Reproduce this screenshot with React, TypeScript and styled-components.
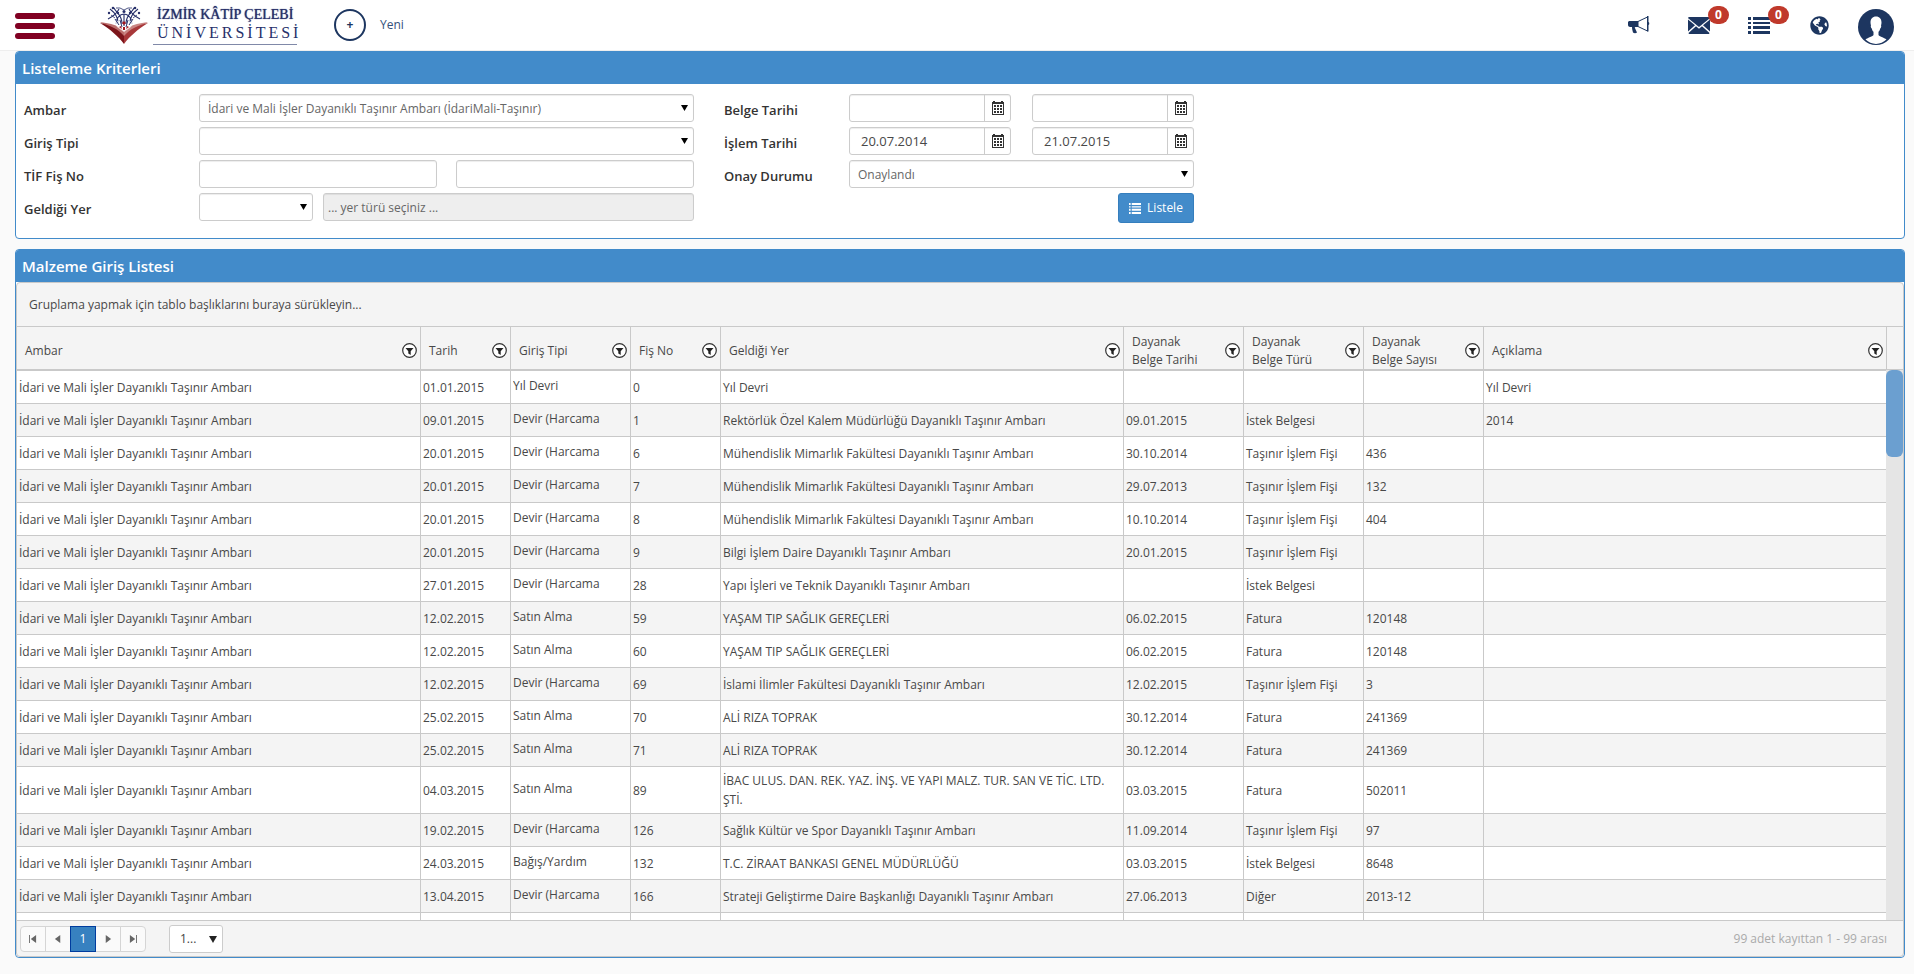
import React from "react";
import styled, { createGlobalStyle, css } from "styled-components";
import { FaGlobeAmericas } from "react-icons/fa";

const blue = "#428bca";
const navy = "#1d3660";
const line = "#c9c9c9";

const GlobalStyle = createGlobalStyle`
  *, *::before, *::after { box-sizing: border-box; }
  body {
    margin: 0;
    background: #fafafa;
    color: #484848;
    font: 12px/18px "Open Sans", "Noto Sans", sans-serif;
  }
  button, input, select { font: inherit; color: inherit; margin: 0; }
`;

const Page = styled.div`
  display: flex;
  flex-direction: column;
  height: 100vh;
  min-height: 500px;
`;

const TopBar = styled.header`
  display: flex;
  align-items: center;
  flex: none;
  height: 51px;
  padding: 0 20px 0 15px;
  background: #fff;
  border-bottom: 1px solid #eee;
`;

const MenuButton = styled.button`
  display: flex;
  flex-direction: column;
  gap: 4px;
  width: 40px;
  padding: 2px 0 0;
  margin-right: 45px;
  border: 0;
  background: none;
  cursor: pointer;
`;

const MenuBar = styled.span`
  height: 6px;
  border-radius: 3px;
  background: #800022;
`;

const Brand = styled.a`
  display: flex;
  align-items: center;
  gap: 5px;
  color: #27306a;
  text-decoration: none;
`;

const BrandText = styled.span`
  display: flex;
  flex-direction: column;
  width: 144px;
  padding: 0 0 2px 4px;
  border-bottom: 1px solid #8089a8;
  font-family: "Liberation Serif", serif;
  line-height: 18px;
  white-space: nowrap;
`;

const BrandName = styled.span`
  font-size: 14px;
  text-shadow: 0 0 1px #27306a;
`;

const BrandKind = styled.span`
  font-size: 16px;
  letter-spacing: 3px;
`;

const NewLink = styled.a`
  display: flex;
  align-items: center;
  gap: 14px;
  margin-left: 37px;
  color: #34507a;
  text-decoration: none;
`;

const PlusCircle = styled.span`
  display: grid;
  place-items: center;
  width: 32px;
  height: 32px;
  border: 2px solid ${navy};
  border-radius: 50%;
  color: ${navy};
  font-weight: 700;
`;

const Tools = styled.nav`
  display: flex;
  align-items: center;
  margin-left: auto;
  color: ${navy};
`;

const ToolButton = styled.button`
  position: relative;
  display: grid;
  place-items: center;
  width: 60px;
  height: 36px;
  padding: 0;
  border: 0;
  background: none;
  cursor: pointer;
`;

const ProfileButton = styled(ToolButton)`
  width: 36px;
  margin-left: 9px;
  margin-top: 4px;
`;

const Badge = styled.span`
  position: absolute;
  top: -1px;
  left: 39px;
  width: 21px;
  height: 18px;
  border-radius: 9px;
  background: #c0392b;
  color: #fff;
  font-size: 12px;
  font-weight: 700;
  line-height: 18px;
`;

const Main = styled.main`
  display: flex;
  flex-direction: column;
  flex: 1;
  gap: 10px;
  min-height: 0;
  padding: 0 9px 16px 15px;
`;

const Panel = styled.section<{ $fill?: boolean }>`
  display: flex;
  flex-direction: column;
  flex: ${(p) => (p.$fill ? "1" : "none")};
  min-height: 0;
  border: 1px solid ${blue};
  border-radius: 4px;
  background: #fff;
  overflow: hidden;
`;

const PanelTitle = styled.h2`
  flex: none;
  margin: 0;
  padding: 0 6px;
  height: 32px;
  background: ${blue};
  color: #fff;
  font-size: 15px;
  font-weight: 600;
  line-height: 32px;
`;

const Criteria = styled.form`
  display: flex;
  align-items: flex-start;
  gap: 30px;
  padding: 10px 8px 17px;
`;

const FieldColumn = styled.div<{ $label: number; $field: number }>`
  display: grid;
  grid-template-columns: ${(p) => p.$label}px minmax(0, ${(p) => p.$field}px);
  grid-auto-rows: 28px;
  row-gap: 5px;
  flex: 0 1 ${(p) => p.$label + p.$field}px;
`;

const Label = styled.label`
  padding-top: 6px;
  color: #333;
  font-size: 13px;
  font-weight: 600;
  line-height: 20px;
`;

const FieldRow = styled.div<{ $gap?: number; $end?: boolean }>`
  display: flex;
  gap: ${(p) => p.$gap ?? 0}px;
  justify-content: ${(p) => (p.$end ? "flex-end" : "flex-start")};
`;

const box = css`
  height: 28px;
  border: 1px solid #ccc;
  border-radius: 3px;
  background: #fff;
  box-shadow: inset 0 1px 1px rgba(0, 0, 0, 0.075);
`;

const TextInput = styled.input`
  ${box}
  flex: 1;
  min-width: 0;
  padding: 0 4px;
  &:disabled {
    background: #eee;
  }
  &::placeholder {
    color: #666;
    opacity: 1;
  }
`;

const SelectWrap = styled.span<{ $width?: number }>`
  position: relative;
  display: flex;
  flex: ${(p) => (p.$width ? `none` : "1")};
  width: ${(p) => (p.$width ? `${p.$width}px` : "auto")};
`;

const SelectBox = styled.select`
  ${box}
  width: 100%;
  padding: 2px 20px 0 8px;
  appearance: none;
  color: #666;
`;

const SelectArrow = styled.svg`
  position: absolute;
  top: 11px;
  right: 6px;
  pointer-events: none;
`;

const DateBox = styled.span`
  ${box}
  display: flex;
  flex: 1;
  min-width: 0;
`;

const DateInput = styled.input`
  flex: 1;
  min-width: 0;
  padding: 0 11px;
  border: 0;
  background: none;
  font-size: 13px;
`;

const DateButton = styled.button`
  display: grid;
  place-items: center;
  width: 26px;
  padding: 0;
  border: 0;
  border-left: 1px solid #ccc;
  background: none;
  color: #333;
`;

const ListButton = styled.button`
  display: flex;
  align-items: center;
  justify-content: center;
  gap: 6px;
  width: 76px;
  height: 30px;
  padding: 0;
  border: 1px solid #357ebd;
  border-radius: 3px;
  background: ${blue};
  color: #fff;
`;

const Grid = styled.div`
  display: flex;
  flex-direction: column;
  flex: 1;
  min-height: 0;
  border: 1px solid ${line};
  border-radius: 4px;
  background: #f4f4f4;
  overflow: hidden;
`;

const GroupBar = styled.div`
  flex: none;
  padding: 0 12px;
  height: 43px;
  line-height: 43px;
`;

const GridArea = styled.div`
  display: flex;
  flex: 1;
  min-height: 0;
  border-top: 1px solid ${line};
  border-bottom: 1px solid ${line};
`;

const Viewport = styled.div`
  flex: 1;
  min-width: 0;
  overflow: auto;
  scrollbar-width: none;
`;

const Table = styled.table`
  width: 100%;
  table-layout: fixed;
  border-collapse: separate;
  border-spacing: 0;
`;

const HeadCell = styled.th`
  position: sticky;
  top: 0;
  height: 44px;
  padding: 5px 3px 0 8px;
  border-left: 1px solid ${line};
  border-bottom: 2px solid ${line};
  background: #f4f4f4;
  font-weight: 400;
  text-align: left;
  &:first-child {
    border-left: 0;
  }
`;

const HeadContent = styled.div`
  display: flex;
  align-items: center;
  justify-content: space-between;
`;

const HeadText = styled.span`
  max-width: 76px;
`;

const FilterButton = styled.button`
  display: grid;
  flex: none;
  padding: 0;
  border: 0;
  background: none;
`;

const Row = styled.tr`
  background: #fff;
  &:nth-child(even) {
    background: #f4f4f4;
  }
`;

const Cell = styled.td`
  height: 33px;
  padding: 4px 2px;
  border-left: 1px solid ${line};
  border-bottom: 1px solid ${line};
  line-height: 19px;
  &:first-child {
    border-left: 0;
  }
`;

const EntryType = styled.div`
  height: 22px;
  overflow: hidden;
`;

const ScrollColumn = styled.div`
  display: flex;
  flex-direction: column;
  flex: none;
  width: 17px;
`;

const ScrollCorner = styled.div`
  height: 43px;
  border-left: 1px solid ${line};
  border-bottom: 1px solid ${line};
`;

const ScrollTrack = styled.div`
  flex: 1;
  background: #e5e5e5;
`;

const ScrollThumb = styled.div`
  height: 87px;
  border-radius: 6px;
  background: #6b9fd0;
`;

const Pager = styled.footer`
  display: flex;
  align-items: center;
  flex: none;
  height: 35px;
  padding: 0 16px 0 3px;
  color: #aaa;
`;

const PageButton = styled.button<{ $current?: boolean }>`
  display: grid;
  place-items: center;
  width: 26px;
  height: 26px;
  margin-right: -1px;
  padding: 0;
  border: 1px solid ${(p) => (p.$current ? "#003c9e" : "#d5d5d5")};
  background: ${(p) => (p.$current ? "#3781c0" : "#fafafa")};
  color: ${(p) => (p.$current ? "#fff" : "#666")};
  position: relative;
  z-index: ${(p) => (p.$current ? 1 : 0)};
  &:first-child {
    border-radius: 4px 0 0 4px;
  }
  &:last-child {
    border-radius: 0 4px 4px 0;
  }
`;

const PageButtons = styled.div`
  display: flex;
  margin-right: 24px;
`;

const PageSize = styled(SelectBox)`
  padding: 0 20px 0 10px;
  color: #444;
  box-shadow: none;
`;

const Summary = styled.span`
  margin-left: auto;
`;

function Logo() {
  return (
    <svg width="48" height="40" viewBox="0 0 48 40" aria-hidden="true">
      <g fill="none" stroke="#27306a" strokeWidth="1.1">
        <path d="M10 4c4 3 8 8 8 14M19 4c-2 4-7 8-11 10M14 3c2 5 8 6 8 16M24 9c-4 0-8 4-8 10M38 4c-4 3-8 8-8 14M29 4c2 4 7 8 11 10M34 3c-2 5-8 6-8 16M24 9c4 0 8 4 8 10M24 9v12" />
        <path d="M16 3h4l4 2 4-2h4M11 10l4 3M37 10l-4 3" strokeWidth="0.8" />
      </g>
      <g fill="#27306a">
        <circle cx="13" cy="3" r="1.3" />
        <circle cx="35" cy="3" r="1.3" />
        <circle cx="24" cy="6.5" r="1.5" />
        <circle cx="9" cy="8" r="1.2" />
        <circle cx="39" cy="8" r="1.2" />
        <circle cx="18" cy="8" r="1.2" />
        <circle cx="30" cy="8" r="1.2" />
      </g>
      <path d="M0 17l6 1c7 1 13 3 18 8v6C18 27 10 23 0 17z" fill="#bd6f6d" />
      <path d="M48 17l-6 1c-7 1-13 3-18 8v6c6-5 14-9 24-15z" fill="#c98583" />
      <path d="M0 18c10 2 18 6 24 13v8C18 31 11 25 0 18z" fill="#7c151b" />
      <path d="M48 18c-10 2-18 6-24 13v8c6-8 13-14 24-21z" fill="#a8383a" />
      <path d="M12 13l8 4 4 6 4-6 8-4-5 9-7 5-7-5z" fill="#fff" opacity="0.75" />
      <path d="M15 14l4 6M33 14l-4 6M20 15l2 7M28 15l-2 7" stroke="#27306a" fill="none" />
      <path d="M22 18l2-2 2 2-2 2zM19 22l2-1 1 3zM29 22l-2-1-1 3zM23 22h2v3h-2z" fill="#a3161e" />
    </svg>
  );
}

function Megaphone() {
  return (
    <svg width="22" height="18" viewBox="0 0 22 18" aria-hidden="true">
      <path
        d="M1 5h9v6H7.500c-1 0-1 1 0 2 0 1 1 2 1.500 3.500-1 1-3 1-4 0C4.500 14.500 4 13 4 11H2C1 11 0 10 0 9V6z"
        fill="currentColor"
      />
      <path d="M10 5.500L19.500 1v14L10 10.500z" fill="none" stroke="currentColor" strokeWidth="1" />
      <path d="M19 0h1.500v6c1 0 1 3 0 3v6.500H19z" fill="currentColor" />
    </svg>
  );
}

function Envelope() {
  return (
    <svg width="22" height="17" viewBox="0 0 22 17" aria-hidden="true">
      <path d="M1 0h20c1 0 1 1 .5 1.500L11 10 .5 1.500C0 1 0 0 1 0z" fill="currentColor" />
      <path d="M0 2.500l7 5.800-7 6.200zM22 2.500l-7 5.800 7 6.200zM8 9.200l3 2.600 3-2.600 7.500 6.800c0 .5-.5 1-1 1h-19c-.5 0-1-.5-1-1z" fill="currentColor" />
    </svg>
  );
}

function ListIcon({ width, height }: { width: number; height: number }) {
  return (
    <svg width={width} height={height} viewBox="0 0 22 17" preserveAspectRatio="none" aria-hidden="true">
      <path
        d="M0 0h3v3H0zM5 0h17v3H5zM0 5h3v2H0zM5 5h17v2H5zM0 9h3v3H0zM5 9h17v3H5zM0 14h3v3H0zM5 14h17v3H5z"
        fill="currentColor"
      />
    </svg>
  );
}

function Avatar() {
  return (
    <svg width="36" height="36" viewBox="0 0 36 36" aria-hidden="true">
      <circle cx="18" cy="18" r="18" fill="currentColor" />
      <path
        d="M18 7.500c-3.500 0-5.500 2.500-5.500 6 0 1 .2 2 .5 3-.6.500 0 2.500.8 3 .3 1.500.9 2.500 1.700 3.300V26c-.5 1.500-5.500 2.500-8 4.500A17 17 0 0 0 18 35a17 17 0 0 0 10.500-4.500c-2.500-2-7.500-3-8-4.500v-3.200c.8-.8 1.400-1.800 1.700-3.300.8-.5 1.400-2.500.8-3 .3-1 .5-2 .5-3 0-3.500-2-6-5.500-6z"
        fill="#fff"
      />
    </svg>
  );
}

function CalendarIcon() {
  return (
    <svg width="12" height="14" viewBox="0 0 12 14" shapeRendering="crispEdges" aria-hidden="true">
      <path
        d="M1 0h2v1h6V0h2v1h1v13H0V1h1zM1 3v10h10V3z"
        fill="currentColor"
        fillRule="evenodd"
      />
      <path
        d="M2 4h2v2H2zM5 4h2v2H5zM8 4h2v2H8zM2 7h2v2H2zM5 7h2v2H5zM8 7h2v2H8zM2 10h2v2H2zM5 10h2v2H5zM8 10h2v2H8z"
        fill="currentColor"
      />
    </svg>
  );
}

function FilterIcon() {
  return (
    <svg width="15" height="15" viewBox="0 0 15 15" aria-hidden="true">
      <circle cx="7.5" cy="7.5" r="6.8" fill="#fff" stroke="#333" strokeWidth="1.2" />
      <path d="M3.500 5h8L8.700 8.200V12L6.300 10.500V8.200z" fill="#222" />
    </svg>
  );
}

function Dropdown({
  id,
  label,
  width,
  value,
}: {
  id: string;
  label?: string;
  width?: number;
  value: string;
}) {
  return (
    <SelectWrap $width={width}>
      <SelectBox id={id} aria-label={label}>
        <option>{value}</option>
      </SelectBox>
      <SelectArrow width="7" height="6" viewBox="0 0 7 6">
        <path d="M0 0h7L3.500 6z" fill="#000" />
      </SelectArrow>
    </SelectWrap>
  );
}

function DateField({ id, label, value }: { id: string; label?: string; value: string }) {
  return (
    <DateBox>
      <DateInput id={id} aria-label={label} defaultValue={value} />
      <DateButton type="button" aria-label="Takvim">
        <CalendarIcon />
      </DateButton>
    </DateBox>
  );
}

const columns: { title: string; width?: number }[] = [
  { title: "Ambar" },
  { title: "Tarih", width: 90 },
  { title: "Giriş Tipi", width: 120 },
  { title: "Fiş No", width: 90 },
  { title: "Geldiği Yer" },
  { title: "Dayanak Belge Tarihi", width: 120 },
  { title: "Dayanak Belge Türü", width: 120 },
  { title: "Dayanak Belge Sayısı", width: 120 },
  { title: "Açıklama" },
];

const store = "İdari ve Mali İşler Dayanıklı Taşınır Ambarı";
const engineering = "Mühendislik Mimarlık Fakültesi Dayanıklı Taşınır Ambarı";

const rows: string[][] = [
  [store, "01.01.2015", "Yıl Devri", "0", "Yıl Devri", "", "", "", "Yıl Devri"],
  [store, "09.01.2015", "Devir (Harcama", "1", "Rektörlük Özel Kalem Müdürlüğü Dayanıklı Taşınır Ambarı", "09.01.2015", "İstek Belgesi", "", "2014"],
  [store, "20.01.2015", "Devir (Harcama", "6", engineering, "30.10.2014", "Taşınır İşlem Fişi", "436", ""],
  [store, "20.01.2015", "Devir (Harcama", "7", engineering, "29.07.2013", "Taşınır İşlem Fişi", "132", ""],
  [store, "20.01.2015", "Devir (Harcama", "8", engineering, "10.10.2014", "Taşınır İşlem Fişi", "404", ""],
  [store, "20.01.2015", "Devir (Harcama", "9", "Bilgi İşlem Daire Dayanıklı Taşınır Ambarı", "20.01.2015", "Taşınır İşlem Fişi", "", ""],
  [store, "27.01.2015", "Devir (Harcama", "28", "Yapı İşleri ve Teknik Dayanıklı Taşınır Ambarı", "", "İstek Belgesi", "", ""],
  [store, "12.02.2015", "Satın Alma", "59", "YAŞAM TIP SAĞLIK GEREÇLERİ", "06.02.2015", "Fatura", "120148", ""],
  [store, "12.02.2015", "Satın Alma", "60", "YAŞAM TIP SAĞLIK GEREÇLERİ", "06.02.2015", "Fatura", "120148", ""],
  [store, "12.02.2015", "Devir (Harcama", "69", "İslami İlimler Fakültesi Dayanıklı Taşınır Ambarı", "12.02.2015", "Taşınır İşlem Fişi", "3", ""],
  [store, "25.02.2015", "Satın Alma", "70", "ALİ RIZA TOPRAK", "30.12.2014", "Fatura", "241369", ""],
  [store, "25.02.2015", "Satın Alma", "71", "ALİ RIZA TOPRAK", "30.12.2014", "Fatura", "241369", ""],
  [store, "04.03.2015", "Satın Alma", "89", "İBAC ULUS. DAN. REK. YAZ. İNŞ. VE YAPI MALZ. TUR. SAN VE TİC. LTD. ŞTİ.", "03.03.2015", "Fatura", "502011", ""],
  [store, "19.02.2015", "Devir (Harcama", "126", "Sağlık Kültür ve Spor Dayanıklı Taşınır Ambarı", "11.09.2014", "Taşınır İşlem Fişi", "97", ""],
  [store, "24.03.2015", "Bağış/Yardım", "132", "T.C. ZİRAAT BANKASI GENEL MÜDÜRLÜĞÜ", "03.03.2015", "İstek Belgesi", "8648", ""],
  [store, "13.04.2015", "Devir (Harcama", "166", "Strateji Geliştirme Daire Başkanlığı Dayanıklı Taşınır Ambarı", "27.06.2013", "Diğer", "2013-12", ""],
  ["", "", "", "", "", "", "", "", ""],
];

const pagerIcons = {
  first: "M0 0h1v9H0zM8 0v9L2 4.500z",
  previous: "M7 0v9L1 4.500z",
  next: "M2 0v9L8 4.500z",
  last: "M8 0h1v9H8zM1 0v9L7 4.500z",
};

function PagerIcon({ name }: { name: keyof typeof pagerIcons }) {
  return (
    <svg width="8" height="8" viewBox="0 0 9 9" aria-hidden="true">
      <path d={pagerIcons[name]} fill="currentColor" />
    </svg>
  );
}

export default function App() {
  return (
    <Page>
      <GlobalStyle />
      <TopBar>
        <MenuButton aria-label="Menü">
          <MenuBar />
          <MenuBar />
          <MenuBar />
        </MenuButton>
        <Brand href="#">
          <Logo />
          <BrandText>
            <BrandName>İZMİR KÂTİP ÇELEBİ</BrandName>
            <BrandKind>ÜNİVERSİTESİ</BrandKind>
          </BrandText>
        </Brand>
        <NewLink href="#">
          <PlusCircle>+</PlusCircle>
          Yeni
        </NewLink>
        <Tools>
          <ToolButton aria-label="Duyurular">
            <Megaphone />
          </ToolButton>
          <ToolButton aria-label="Mesajlar">
            <Envelope />
            <Badge>0</Badge>
          </ToolButton>
          <ToolButton aria-label="Görevler">
            <ListIcon width={22} height={17} />
            <Badge>0</Badge>
          </ToolButton>
          <ToolButton aria-label="Dil">
            <FaGlobeAmericas size={19} />
          </ToolButton>
          <ProfileButton aria-label="Profil">
            <Avatar />
          </ProfileButton>
        </Tools>
      </TopBar>

      <Main>
        <Panel>
          <PanelTitle>Listeleme Kriterleri</PanelTitle>
          <Criteria>
            <FieldColumn $label={175} $field={495}>
              <Label htmlFor="ambar">Ambar</Label>
              <FieldRow>
                <Dropdown id="ambar" value="İdari ve Mali İşler Dayanıklı Taşınır Ambarı (İdariMali-Taşınır)" />
              </FieldRow>
              <Label htmlFor="giris">Giriş Tipi</Label>
              <FieldRow>
                <Dropdown id="giris" value="" />
              </FieldRow>
              <Label htmlFor="tif">TİF Fiş No</Label>
              <FieldRow $gap={19}>
                <TextInput id="tif" />
                <TextInput aria-label="TİF Fiş No bitiş" />
              </FieldRow>
              <Label htmlFor="yer">Geldiği Yer</Label>
              <FieldRow $gap={10}>
                <Dropdown id="yer" width={114} value="" />
                <TextInput disabled aria-label="Yer" placeholder="... yer türü seçiniz ..." />
              </FieldRow>
            </FieldColumn>
            <FieldColumn $label={125} $field={345}>
              <Label htmlFor="belge">Belge Tarihi</Label>
              <FieldRow $gap={21}>
                <DateField id="belge" value="" />
                <DateField id="belge-son" label="Belge Tarihi bitiş" value="" />
              </FieldRow>
              <Label htmlFor="islem">İşlem Tarihi</Label>
              <FieldRow $gap={21}>
                <DateField id="islem" value="20.07.2014" />
                <DateField id="islem-son" label="İşlem Tarihi bitiş" value="21.07.2015" />
              </FieldRow>
              <Label htmlFor="onay">Onay Durumu</Label>
              <FieldRow>
                <Dropdown id="onay" value="Onaylandı" />
              </FieldRow>
              <span />
              <FieldRow $end>
                <ListButton type="button">
                  <ListIcon width={12} height={11} />
                  Listele
                </ListButton>
              </FieldRow>
            </FieldColumn>
          </Criteria>
        </Panel>

        <Panel $fill>
          <PanelTitle>Malzeme Giriş Listesi</PanelTitle>
          <Grid>
            <GroupBar>Gruplama yapmak için tablo başlıklarını buraya sürükleyin...</GroupBar>
            <GridArea>
              <Viewport>
                <Table>
                  <colgroup>
                    {columns.map((c) => (
                      <col key={c.title} width={c.width} />
                    ))}
                  </colgroup>
                  <thead>
                    <tr>
                      {columns.map((c) => (
                        <HeadCell key={c.title} scope="col">
                          <HeadContent>
                            <HeadText>{c.title}</HeadText>
                            <FilterButton aria-label="Filtrele">
                              <FilterIcon />
                            </FilterButton>
                          </HeadContent>
                        </HeadCell>
                      ))}
                    </tr>
                  </thead>
                  <tbody>
                    {rows.map((row, r) => (
                      <Row key={r}>
                        {row.map((text, c) => (
                          <Cell key={c}>{c === 2 ? <EntryType>{text}</EntryType> : text}</Cell>
                        ))}
                      </Row>
                    ))}
                  </tbody>
                </Table>
              </Viewport>
              <ScrollColumn>
                <ScrollCorner />
                <ScrollTrack>
                  <ScrollThumb />
                </ScrollTrack>
              </ScrollColumn>
            </GridArea>
            <Pager>
              <PageButtons>
                <PageButton aria-label="İlk sayfa">
                  <PagerIcon name="first" />
                </PageButton>
                <PageButton aria-label="Önceki sayfa">
                  <PagerIcon name="previous" />
                </PageButton>
                <PageButton $current>1</PageButton>
                <PageButton aria-label="Sonraki sayfa">
                  <PagerIcon name="next" />
                </PageButton>
                <PageButton aria-label="Son sayfa">
                  <PagerIcon name="last" />
                </PageButton>
              </PageButtons>
              <SelectWrap $width={54}>
                <PageSize aria-label="Sayfa boyutu">
                  <option>1...</option>
                </PageSize>
                <SelectArrow width="8" height="7" viewBox="0 0 8 7">
                  <path d="M0 0h8L4 7z" fill="#222" />
                </SelectArrow>
              </SelectWrap>
              <Summary>99 adet kayıttan 1 - 99 arası</Summary>
            </Pager>
          </Grid>
        </Panel>
      </Main>
    </Page>
  );
}
